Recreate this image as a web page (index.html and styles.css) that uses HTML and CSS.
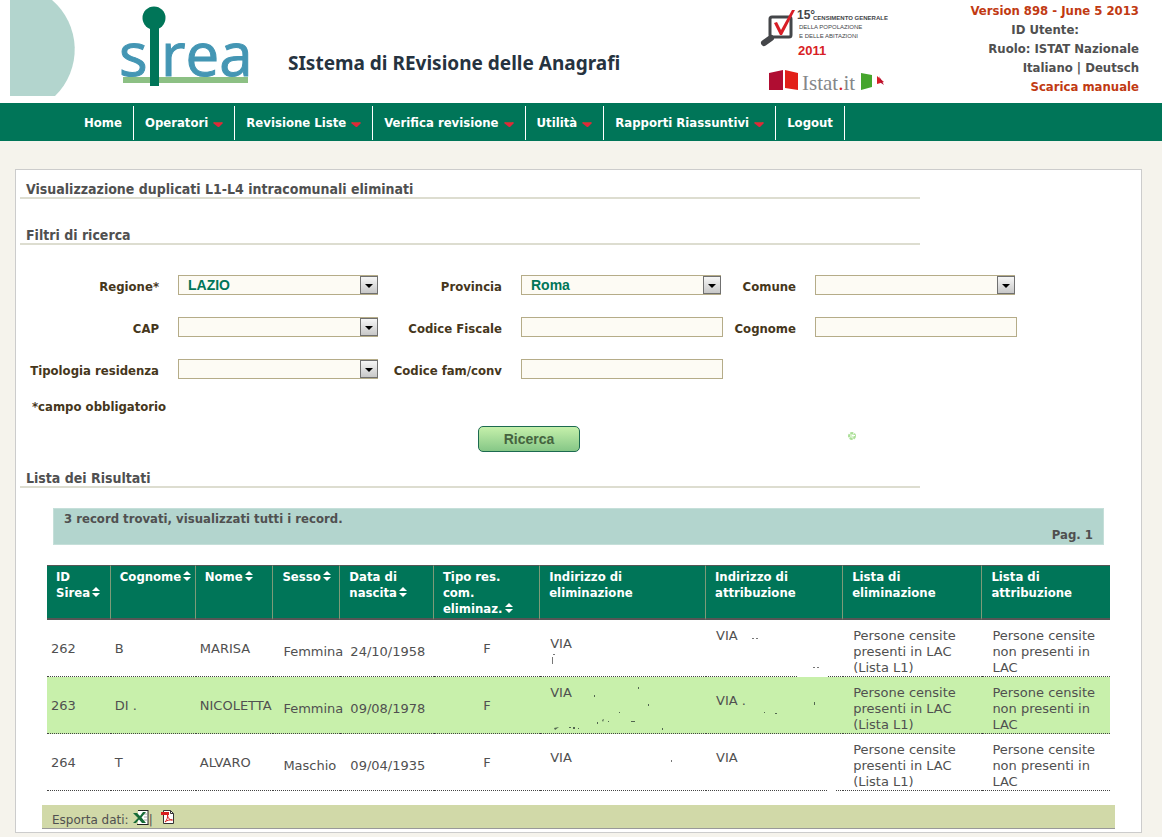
FILE: index.html
```html
<!DOCTYPE html>
<html lang="it">
<head>
<meta charset="utf-8">
<title>SIREA - Visualizzazione duplicati</title>
<link rel="stylesheet" href="styles.css">
</head>
<body>
<svg class="sprite" aria-hidden="true">
  <symbol id="sort" viewBox="0 0 8 10"><path d="M4 0L8 4H0zM0 6h8L4 10z" fill="#fff"/></symbol>
  <symbol id="down" viewBox="0 0 10 6"><path d="M1 1h8l1 1-4 4H5L0 2z" fill="#e0283a"/><path d="M1 1h8L8 2H2z" fill="#a04a34"/></symbol>
</svg>

<header class="header">
  <svg class="brand" width="260" height="103" viewBox="0 0 260 103" role="img" aria-label="sirea">
    <path d="M10 0H52A65 65 0 0 1 55 96H10z" fill="#b3d5ce"/>
    <rect x="123" y="77" width="125" height="6" fill="#8cc084"/>
    <text class="brand-text" x="119" y="76">s</text>
    <text class="brand-text" x="161" y="76">rea</text>
    <circle cx="154" cy="18" r="11.500" fill="#007558"/>
    <rect x="150" y="26" width="9" height="60" fill="#007558"/>
  </svg>
  <p class="tagline">SIstema di REvisione delle Anagrafi</p>
  <svg class="partners" width="130" height="103" viewBox="0 0 130 103" role="img" aria-label="15° Censimento generale, Istat.it">
    <rect x="10" y="17" width="21" height="20" rx="2" fill="#fff" stroke="#444649" stroke-width="3"/>
    <path d="M11 38L4 43" stroke="#444649" stroke-width="6" stroke-linecap="round"/>
    <path d="M14 23l3-1 4 8L32 10h3L22 35h-2z" fill="#d81e26"/>
    <text class="cens-big" x="37" y="19">15°</text>
    <text class="cens-bold" x="53" y="20">CENSIMENTO GENERALE</text>
    <text class="cens-line" x="39" y="29">DELLA POPOLAZIONE</text>
    <text class="cens-line" x="39" y="38">E DELLE ABITAZIONI</text>
    <text class="cens-year" x="38" y="55">2011</text>
    <path d="M9 73l14-3v20H9z" fill="#b00d32"/><path d="M25 70l13 3v17l-13-2z" fill="#e22019"/>
    <text class="istat" x="42" y="90">Istat<tspan fill="#d81e26">.</tspan>it</text>
    <path d="M101 73l11 2v12l-11 3z" fill="#45a52c"/><path d="M117 76l7 6-7 2z" fill="#d81e26"/><path d="M119 76l5 9-3-2z" fill="#b00d32"/>
  </svg>
  <div class="user">
    <span class="accent">Version 898 - June 5 2013</span>
    <span class="user-id">ID Utente:</span>
    <span>Ruolo: ISTAT Nazionale</span>
    <span><a href="#">Italiano</a> | <a href="#">Deutsch</a></span>
    <a class="accent" href="#">Scarica manuale</a>
  </div>
</header>

<nav class="nav">
  <a href="#">Home</a>
  <a href="#">Operatori <svg class="down"><use href="#down"/></svg></a>
  <a href="#">Revisione Liste <svg class="down"><use href="#down"/></svg></a>
  <a href="#">Verifica revisione <svg class="down"><use href="#down"/></svg></a>
  <a href="#">Utilità <svg class="down"><use href="#down"/></svg></a>
  <a href="#">Rapporti Riassuntivi <svg class="down"><use href="#down"/></svg></a>
  <a href="#">Logout</a>
</nav>

<main class="panel">
  <h1 class="heading">Visualizzazione duplicati L1-L4 intracomunali eliminati</h1>
  <h2 class="heading heading-filters">Filtri di ricerca</h2>

  <form class="form">
    <div class="fields">
      <label for="regione">Regione*</label>
      <span class="select"><select id="regione"><option>LAZIO</option></select></span>
      <label for="provincia">Provincia</label>
      <span class="select"><select id="provincia"><option>Roma</option></select></span>
      <label for="comune">Comune</label>
      <span class="select"><select id="comune"><option></option></select></span>
      <label for="cap">CAP</label>
      <span class="select"><select id="cap"><option></option></select></span>
      <label for="cf">Codice Fiscale</label>
      <input id="cf" type="text">
      <label for="cognome">Cognome</label>
      <input id="cognome" type="text">
      <label for="tipologia">Tipologia residenza</label>
      <span class="select"><select id="tipologia"><option></option></select></span>
      <label for="fam">Codice fam/conv</label>
      <input id="fam" type="text">
    </div>
    <p class="required">*campo obbligatorio</p>
    <div class="actions">
      <button class="search" type="submit">Ricerca</button>
      <svg class="spinner" width="8" height="8" viewBox="0 0 8 8" aria-hidden="true"><circle cx="4" cy="4" r="3" fill="#d8f3cd" stroke="#abdf98" stroke-width="2" stroke-dasharray="3 1"/><path d="M4 3h3v1H4z" fill="#fff"/></svg>
    </div>
  </form>

  <h2 class="heading">Lista dei Risultati</h2>
  <div class="summary">
    <p>3 record trovati, visualizzati tutti i record.</p>
    <p class="page">Pag. 1</p>
  </div>

  <table class="results">
    <colgroup><col class="c-id"><col class="c-cognome"><col class="c-nome"><col class="c-sesso"><col class="c-data"><col class="c-tipo"><col class="c-ind"><col class="c-att"><col class="c-lista"><col></colgroup>
    <thead>
      <tr>
        <th>ID<br>Sirea<svg class="sort"><use href="#sort"/></svg></th>
        <th>Cognome<svg class="sort"><use href="#sort"/></svg></th>
        <th>Nome<svg class="sort"><use href="#sort"/></svg></th>
        <th>Sesso<svg class="sort"><use href="#sort"/></svg></th>
        <th>Data di<br>nascita<svg class="sort"><use href="#sort"/></svg></th>
        <th>Tipo res.<br>com.<br>eliminaz.<svg class="sort"><use href="#sort"/></svg></th>
        <th>Indirizzo di<br>eliminazione</th>
        <th>Indirizzo di<br>attribuzione</th>
        <th>Lista di<br>eliminazione</th>
        <th>Lista di<br>attribuzione</th>
      </tr>
    </thead>
    <tbody>
      <tr>
        <td class="plain">262</td><td class="plain">B</td><td class="plain">MARISA</td>
        <td>Femmina</td><td>24/10/1958</td><td class="plain center">F</td>
        <td class="marked">VIA<br>&nbsp;
          <svg class="marks" width="166" height="57" viewBox="0 0 166 57" aria-hidden="true"><path d="M12 37h1v7h-1zM13 34h2v1h-2z" fill="#777"/></svg></td>
        <td class="marked">VIA<br>&nbsp;<br>&nbsp;
          <svg class="marks" width="137" height="57" viewBox="0 0 137 57" aria-hidden="true"><path d="M46 18h2v1h-2zM50 18h2v1h-2zM107 47h2v1h-2zM111 47h2v1h-2z" fill="#777"/><path d="M92 55h30v2H92z" fill="#fff"/></svg></td>
        <td>Persone censite<br>presenti in LAC<br>(Lista L1)</td>
        <td>Persone censite<br>non presenti in<br>LAC</td>
      </tr>
      <tr class="even">
        <td class="plain">263</td><td class="plain">DI .</td><td class="plain">NICOLETTA</td>
        <td>Femmina</td><td>09/08/1978</td><td class="plain center">F</td>
        <td class="marked">VIA<br>&nbsp;<br>&nbsp;
          <svg class="marks" width="166" height="57" viewBox="0 0 166 57" aria-hidden="true"><path d="M54 18h1v2h-1zM98 10h1v2h-1zM108 27h1v2h-1zM79 35h1v1h-1zM57 45h1v2h-1zM62 43l2-1-1 3zM68 44h1v1h-1zM91 44h4v1h-4zM14 51l5-1-4 3zM29 50h2v1h-2zM33 50h2v2h-2zM38 51h1v1h-1zM122 51h1v2h-1z" fill="#526650"/></svg></td>
        <td class="marked">VIA .<br>&nbsp;
          <svg class="marks" width="137" height="57" viewBox="0 0 137 57" aria-hidden="true"><path d="M108 25h1v3h-1zM58 35h1v1h-1zM69 36h2v1h-2z" fill="#526650"/></svg></td>
        <td>Persone censite<br>presenti in LAC<br>(Lista L1)</td>
        <td>Persone censite<br>non presenti in<br>LAC</td>
      </tr>
      <tr>
        <td class="plain">264</td><td class="plain">T</td><td class="plain">ALVARO</td>
        <td>Maschio</td><td>09/04/1935</td><td class="plain center">F</td>
        <td class="marked">VIA<br>&nbsp;
          <svg class="marks" width="166" height="57" viewBox="0 0 166 57" aria-hidden="true"><path d="M131 26h1v2h-1z" fill="#777"/></svg></td>
        <td class="marked">VIA<br>&nbsp;
          <svg class="marks" width="137" height="57" viewBox="0 0 137 57" aria-hidden="true"><path d="M121 55h8v2h-8z" fill="#fff"/></svg></td>
        <td>Persone censite<br>presenti in LAC<br>(Lista L1)</td>
        <td>Persone censite<br>non presenti in<br>LAC</td>
      </tr>
    </tbody>
  </table>

  <div class="export">
    <span>Esporta dati:</span>
    <a href="#" aria-label="Excel"><svg width="16" height="16" viewBox="0 0 16 16"><path d="M5 1h10v13H5z" fill="#fff"/><path d="M5 .5h10M15 0v14.500M4 14.500h11.500" stroke="#222" fill="none"/><path d="M11 4h3M11 7h3M11 10h3" stroke="#aaa"/><path d="M0 3h4l3 3 3-4h3L8.500 7.500 13 13H9L6 9.500 3 13H0l5-5z" fill="#176b38"/></svg></a>
    <span>|</span>
    <a class="pdf" href="#" aria-label="PDF"><svg width="14" height="14" viewBox="0 0 14 14"><path d="M2.500.5h7l3 3v10h-10z" fill="#fff" stroke="#333"/><path d="M9.500.5v3h3" fill="none" stroke="#333"/><path d="M0 2h8v3H0z" fill="#d81e1e"/><path d="M4 12c2-2 3-5 2.500-7 0 3 2 5 5 5-3-.5-6 .5-7.500 2z" fill="none" stroke="#d81e1e"/></svg></a>
  </div>
</main>
</body>
</html>
```
FILE: styles.css
```css
*, *::before, *::after { box-sizing: border-box; }

body {
  margin: 0;
  background: #f5f3ec;
  color: #505050;
  font: 13px/16px "DejaVu Sans", Verdana, sans-serif;
}

p, h1, h2 { margin: 0; }
a { color: inherit; text-decoration: none; }

.sprite { display: none; }

.header,
.nav,
.heading,
.fields,
.required,
.summary,
.results th {
  font-family: "DejaVu Sans Condensed", "DejaVu Sans", Tahoma, sans-serif;
  font-weight: bold;
}

.header {
  display: flex;
  height: 103px;
  background: #fff;
}

.brand { flex: none; }
.brand-text { font: 60px "Open Sans", sans-serif; fill: #4496b4; stroke: #4496b4; }

.tagline {
  flex: 1;
  padding: 50px 0 0 28px;
  font: bold 19px/26px "Noto Sans", sans-serif;
  color: #26333f;
  white-space: nowrap;
}

.partners { flex: none; }
.partners text { fill: #444649; }
.cens-big { font: bold 12px "Liberation Sans Narrow", "Liberation Sans", sans-serif; }
.cens-bold { font: bold 6px "Liberation Sans Narrow", "Liberation Sans", sans-serif; }
.cens-line { font: 6px "Liberation Sans Narrow", "Liberation Sans", sans-serif; }
.partners .cens-year { font: bold 13px "Liberation Sans Narrow", "Liberation Sans", sans-serif; fill: #d81e26; }
.partners .istat { font: 21px "Liberation Serif", serif; fill: #85878a; }

.user {
  display: flex;
  flex-direction: column;
  align-items: flex-end;
  width: 272px;
  padding: 1px 23px 0 0;
  line-height: 19px;
}
.user-id { padding-right: 60px; }
.accent { color: #c13a12; }

.nav {
  display: flex;
  height: 38px;
  padding: 3px 0 1px 73px;
  background: #007558;
  color: #fff;
  line-height: 34px;
}
.nav a {
  padding: 0 11px;
  border-right: 1px solid #fff;
  white-space: nowrap;
}
.down { width: 10px; height: 6px; margin-left: 1px; }

.panel {
  margin: 28px 20px 4px 15px;
  padding: 9px 0 3px;
  border: 1px solid #ccc;
  background: #fff;
}

.heading {
  width: 80%;
  margin-left: 4px;
  padding: 2px 6px 0;
  border-bottom: 2px solid #ddddd0;
  font-size: 14px;
  line-height: 16px;
}
.heading-filters { margin-top: 26px; }

.form { color: #46371c; }

.fields {
  display: grid;
  grid-template-columns: 143px 202px 103px 202px 54px 202px;
  column-gap: 19px;
  row-gap: 22px;
  padding-top: 30px;
}
.fields label {
  padding-top: 4px;
  line-height: 16px;
  text-align: right;
  white-space: nowrap;
  justify-self: end;
}

.select { position: relative; width: 200px; }
.select::before {
  content: "";
  position: absolute;
  top: 1px;
  right: 0;
  width: 18px;
  height: 18px;
  border: 1px solid #707070;
  background: linear-gradient(#f6f6f6, #c8c8c8);
  pointer-events: none;
}
.select::after {
  content: "";
  position: absolute;
  top: 9px;
  right: 5px;
  border: 4px solid transparent;
  border-top-color: #000;
  border-bottom: 0;
  pointer-events: none;
}

.fields select,
.fields input {
  display: block;
  width: 100%;
  height: 20px;
  margin: 0;
  padding: 0 9px;
  appearance: none;
  border: 1px solid #b5ac88;
  border-radius: 0;
  background: #fdfbf4;
  color: #007558;
  font: bold 14px "Liberation Sans", Arial, sans-serif;
}

.required {
  padding: 20px 16px 0;
}

.actions {
  display: flex;
  align-items: center;
  padding: 11px 0 16px 462px;
}
.search {
  width: 102px;
  height: 26px;
  padding: 0;
  border: 1px solid #1c6a50;
  border-radius: 5px;
  background: linear-gradient(#c5f0ab, #86c787);
  color: #45643f;
  font: bold 14px "Liberation Sans", Arial, sans-serif;
}
.spinner { margin: -6px 0 0 268px; }

.summary {
  margin: 20px 37px 0;
  padding: 2px 10px 1px;
  border: 1px solid #c5dfd9;
  background: #b3d5ce;
}
.page { text-align: right; }

.results {
  width: calc(100% - 62px);
  margin: 20px 31px 0;
  table-layout: fixed;
  border-collapse: separate;
  border-spacing: 0;
}
.c-id { width: 6%; }
.c-cognome { width: 8%; }
.c-nome { width: 7.300%; }
.c-sesso { width: 6.300%; }
.c-data { width: 8.800%; }
.c-tipo { width: 10%; }
.c-ind { width: 15.600%; }
.c-att { width: 12.900%; }
.c-lista { width: 13.100%; }

.results th {
  padding: 3px 0 1px 9px;
  border-top: 1px solid #555;
  border-bottom: 2px solid #555;
  border-right: 1px solid #7d9a78;
  background: #007558;
  color: #fff;
  text-align: left;
  vertical-align: top;
  white-space: nowrap;
}
.results th:last-child { border-right: 0; }
.sort { width: 8px; height: 10px; margin-left: 2px; }

.results td {
  padding: 8px 0 0 10px;
  border-bottom: 1px dotted #444;
  vertical-align: middle;
  white-space: nowrap;
}
.results .plain { padding: 2px 0 0 4px; }
.results .center { padding-left: 0; text-align: center; }
.even td { background: #c8f0ab; }

.results .marked { position: relative; }
.marks { position: absolute; top: 0; left: 0; }

.export {
  display: flex;
  align-items: flex-end;
  height: 24px;
  margin: 14px 26px 0;
  padding-left: 10px;
  border-bottom: 1px solid #999;
  background: #d1d9a8;
  font-size: 12px;
  line-height: 16px;
}
.export a { margin-left: 4px; }
.export svg { display: block; margin-bottom: 2px; }
.export .pdf { margin-left: 8px; }
.export .pdf svg { margin-bottom: 4px; }
```
